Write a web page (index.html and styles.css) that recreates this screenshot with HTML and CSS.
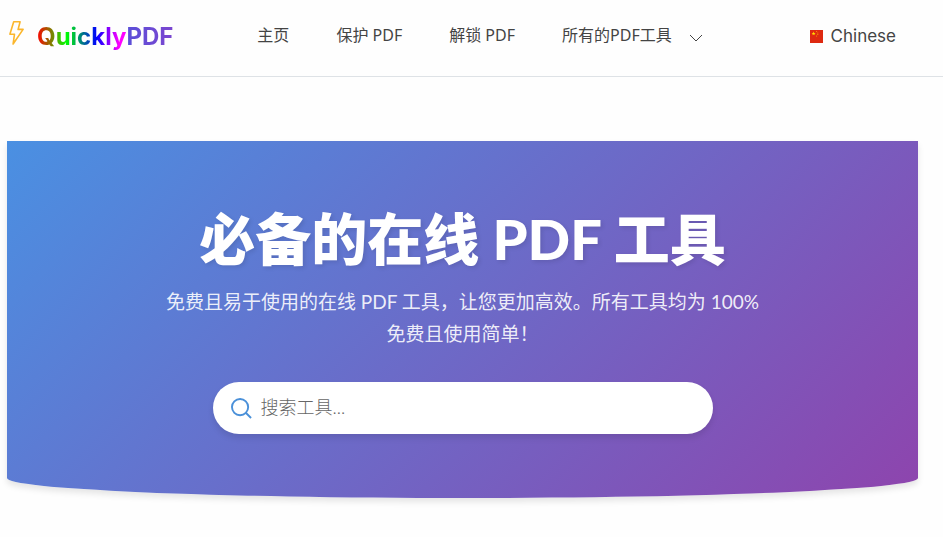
FILE: index.html
```
<!DOCTYPE html>
<html lang="zh-CN">

<head>
    <meta charset="UTF-8">
    <meta name="viewport" content="width=device-width, initial-scale=1.0">
    <title>QuicklyPDF</title>
    <link rel="stylesheet" href="styles.css">
</head>

<body>
    <header class="header">
        <a href="#" class="logo">
            <svg class="logo-icon" viewBox="0 0 16 26" aria-hidden="true">
                <path d="M5.2 1.8H11.6L9.6 9.4H14.6L4.6 24L6 14.2H1.4Z" />
            </svg>
            <span class="logo-text"><span class="logo-quickly">Quickly</span><span class="logo-pdf">PDF</span></span>
        </a>
        <nav class="nav">
            <a href="#" class="nav-link">主页</a>
            <a href="#" class="nav-link">保护 PDF</a>
            <a href="#" class="nav-link">解锁 PDF</a>
            <a href="#" class="nav-link">所有的PDF工具
                <svg class="chevron" viewBox="0 0 14 8" aria-hidden="true">
                    <path d="M1 1L7 7L13 1" />
                </svg>
            </a>
        </nav>
        <button type="button" class="language">
            <svg class="flag" viewBox="0 0 13 13" aria-hidden="true">
                <rect width="13" height="13" fill="#de2910" />
                <path d="M3.6 1.6L4.1 3H5.6L4.4 3.9L4.8 5.3L3.6 4.4L2.4 5.3L2.8 3.9L1.6 3H3.1Z" fill="#ffde00" />
                <circle cx="6.6" cy="1.6" r=".5" fill="#ffb000" />
                <circle cx="7.8" cy="2.9" r=".5" fill="#ffb000" />
                <circle cx="7.8" cy="4.6" r=".5" fill="#ffb000" />
                <circle cx="6.6" cy="5.9" r=".5" fill="#ffb000" />
            </svg>
            Chinese
        </button>
    </header>

    <main>
        <section class="hero">
            <h1 class="hero-title">必备的在线 PDF 工具</h1>
            <p class="hero-text">免费且易于使用的在线 PDF 工具，让您更加高效。所有工具均为 100% 免费且使用简单！</p>
            <form class="search">
                <svg class="search-icon" viewBox="0 0 22 22" aria-hidden="true">
                    <circle cx="9.5" cy="9.5" r="8.5" />
                    <path d="M15.5 15.5L21 21" />
                </svg>
                <input type="text" class="search-input" placeholder="搜索工具..." aria-label="搜索工具">
            </form>
        </section>
    </main>
</body>

</html>
```
FILE: styles.css
```
* {
    box-sizing: border-box;
}

body {
    min-height: 100vh;
    margin: 0;
    background: #fefefe;
    color: #444;
    font-family: "Noto Sans", "Noto Sans CJK SC", sans-serif;
    font-size: 16px;
    line-height: 24px;
}

.header {
    display: flex;
    align-items: center;
    padding: 12px 47px 16px 8px;
    border-bottom: 1px solid #dee2e6;
}

.logo {
    display: flex;
    align-items: center;
    gap: 12px;
    height: 48px;
    text-decoration: none;
}

.logo-icon {
    width: 17px;
    height: 26px;
    margin-bottom: 6px;
    fill: none;
    stroke: #fbb62c;
    stroke-width: 1.6;
    stroke-linejoin: round;
}

.logo-text {
    padding-top: 2px;
    font-family: Inter, sans-serif;
    font-size: 24px;
    font-weight: 700;
    line-height: 32px;
}

.logo-quickly,
.logo-pdf {
    -webkit-background-clip: text;
    background-clip: text;
    color: transparent;
}

.logo-quickly {
    background-image: linear-gradient(to right, #f00, #0f0 33%, #00f 67%, #f0f 92%);
}

.logo-pdf {
    background-image: linear-gradient(to right, #5a4fd8, #7b46d0);
}

.nav {
    display: flex;
    gap: 47px;
    margin-left: 84px;
}

.nav-link {
    display: flex;
    align-items: center;
    height: 26px;
    padding-bottom: 2px;
    color: #444;
    text-decoration: none;
    white-space: nowrap;
}

.chevron {
    width: 14px;
    height: 8px;
    margin: 6px 0 0 17px;
    fill: none;
    stroke: #444;
    stroke-width: 1;
}

.language {
    display: flex;
    align-items: center;
    gap: 8px;
    margin-left: auto;
    padding: 0;
    border: none;
    background: none;
    color: #444;
    font-family: Inter, sans-serif;
    font-size: 17px;
    line-height: 24px;
    cursor: pointer;
}

.flag {
    width: 13px;
    height: 13px;
}

.hero {
    margin: 64px 25px 32px 7px;
    padding: 64px 20px;
    border-radius: 0 0 50% 50% / 0 0 20px 20px;
    background: linear-gradient(135deg, #4a90e2, #8e44ad);
    box-shadow: 0 4px 6px rgba(0, 0, 0, 0.1);
    color: #fff;
    text-align: center;
}

.hero-title {
    margin: 0 0 14px;
    font-family: Lato, "Noto Sans CJK SC", sans-serif;
    font-size: 56px;
    font-weight: 900;
    line-height: 67px;
    text-shadow: 2px 2px 4px rgba(0, 0, 0, 0.1);
}

.hero-text {
    max-width: 600px;
    margin: 0 auto 32px;
    color: rgba(255, 255, 255, 0.9);
    font-family: Lato, "Noto Sans CJK SC", sans-serif;
    font-size: 19px;
    line-height: 32px;
}

.search {
    display: flex;
    align-items: center;
    gap: 9px;
    max-width: 500px;
    height: 52px;
    margin: 0 auto;
    padding: 0 18px;
    border-radius: 26px;
    background: #fff;
    box-shadow: 0 4px 6px rgba(0, 0, 0, 0.1);
}

.search-icon {
    flex: none;
    width: 21px;
    height: 21px;
    fill: none;
    stroke: #4a90d9;
    stroke-width: 2;
}

.search-input {
    flex: 1;
    min-width: 0;
    padding: 0 0 2px;
    border: none;
    outline: none;
    background: none;
    color: #444;
    font-family: Lato, "Noto Sans CJK SC", sans-serif;
    font-size: 18px;
    font-weight: 300;
    line-height: 28px;
}

.search-input::placeholder {
    color: #666;
}
```
